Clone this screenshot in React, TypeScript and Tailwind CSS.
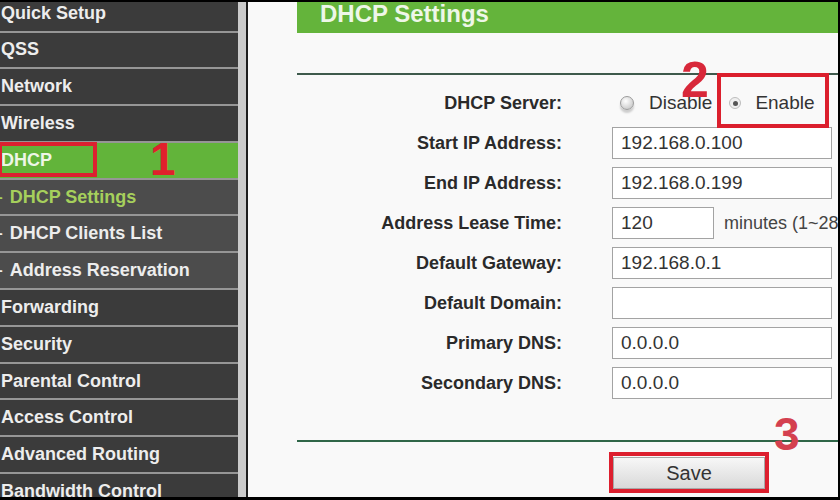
import React from "react";

type NavItem = { label: string; kind: "main" | "active" | "sub" | "subActive" };

const navItems: NavItem[] = [
    { label: "Quick Setup", kind: "main" },
    { label: "QSS", kind: "main" },
    { label: "Network", kind: "main" },
    { label: "Wireless", kind: "main" },
    { label: "DHCP", kind: "active" },
    { label: "DHCP Settings", kind: "subActive" },
    { label: "DHCP Clients List", kind: "sub" },
    { label: "Address Reservation", kind: "sub" },
    { label: "Forwarding", kind: "main" },
    { label: "Security", kind: "main" },
    { label: "Parental Control", kind: "main" },
    { label: "Access Control", kind: "main" },
    { label: "Advanced Routing", kind: "main" },
    { label: "Bandwidth Control", kind: "main" },
];

const fields = [
    { label: "Start IP Address:", value: "192.168.0.100" },
    { label: "End IP Address:", value: "192.168.0.199" },
    { label: "Address Lease Time:", value: "120", lease: true },
    { label: "Default Gateway:", value: "192.168.0.1" },
    { label: "Default Domain:", value: "" },
    { label: "Primary DNS:", value: "0.0.0.0" },
    { label: "Secondary DNS:", value: "0.0.0.0" },
];

function SideRow({ item }: { item: NavItem }) {
    const bg =
        item.kind === "active"
            ? "bg-[#62b43a] text-[#eef6e6]"
            : item.kind === "main"
            ? "bg-[#3b3b3b] text-[#ededed]"
            : item.kind === "subActive"
            ? "bg-[#4c4c4c] text-[#a6d05c]"
            : "bg-[#4c4c4c] text-[#ededed]";
    const isSub = item.kind === "sub" || item.kind === "subActive";
    return (
        <div
            className={`h-[36.8px] shrink-0 border-b-2 border-[#969696] flex items-center pl-[1px] text-[18px] font-bold whitespace-nowrap ${bg}`}
        >
            {isSub && <span className="-ml-[3px] mr-[7px] text-[14px]">-</span>}
            {item.label}
        </div>
    );
}

export default function App() {
    return (
        <div
            className="relative w-[840px] h-[500px] overflow-hidden flex border-t-2 border-r-2 border-b-[3px] border-black bg-[#f8f8f8]"
            style={{ fontFamily: '"Liberation Sans", Arial, sans-serif' }}
        >
            {/* sidebar */}
            <div className="w-[238px] shrink-0 flex flex-col -mt-[6.3px]">
                {navItems.map((item) => (
                    <SideRow key={item.label} item={item} />
                ))}
            </div>
            <div className="w-[8px] shrink-0 bg-[#cbcbcb]" />
            <div className="w-[2px] shrink-0 bg-[#1e1e1e]" />

            {/* content */}
            <div className="flex-1 flex flex-col overflow-hidden bg-[#f9f9f9]">
                <div className="ml-[49px] -mt-[7px] h-[38px] shrink-0 bg-[#64b43b] flex items-center pl-[23px] text-[24px] font-bold text-[#eef7e8]">
                    DHCP Settings
                </div>
                <div className="ml-[49px] mt-[40px] h-[2px] shrink-0 bg-[#3e5a4c]" />

                <div className="ml-[49px] mt-[8px] grid grid-cols-[265px_220px] gap-x-[50px] text-[#2a2a2a]">
                    <div className="h-[40px] flex items-center justify-end text-[18px] font-bold">DHCP Server:</div>
                    <div className="h-[40px] flex items-center text-[19px] text-[#333] whitespace-nowrap">
                        <span className="ml-[8px] w-[14px] h-[14px] shrink-0 rounded-full border border-[#9c9c9c] bg-[radial-gradient(circle_at_40%_35%,#ffffff,#bdbdbd)] shadow-[0_3px_2px_rgba(0,0,0,0.18)]" />
                        <span className="ml-[15px]">Disable</span>
                        <span className="ml-[17px] w-[12px] h-[12px] shrink-0 rounded-full border border-[#bdbdbd] bg-[#efefef] flex items-center justify-center">
                            <span className="w-[5px] h-[5px] rounded-full bg-[#555]" />
                        </span>
                        <span className="ml-[14px]">Enable</span>
                    </div>

                    {fields.map((f) => (
                        <React.Fragment key={f.label}>
                            <div className="h-[40px] flex items-center justify-end text-[18px] font-bold whitespace-nowrap">
                                {f.label}
                            </div>
                            <div className="h-[40px] flex items-center whitespace-nowrap">
                                <div
                                    className={`h-[32px] shrink-0 ${f.lease ? "w-[102px]" : "w-[220px]"} border border-[#a3a3a3] bg-white flex items-center px-[8px] text-[19px] text-[#333]`}
                                >
                                    {f.value}
                                </div>
                                {f.lease && (
                                    <span className="ml-[10px] shrink-0 text-[18px] text-[#444]">minutes (1~2880)</span>
                                )}
                            </div>
                        </React.Fragment>
                    ))}
                </div>

                <div className="ml-[49px] mt-[37px] h-[2px] shrink-0 bg-[#2f6648]" />
                <div className="mt-[15px] ml-[365px]">
                    <button className="w-[152px] h-[32px] border border-[#a8a8a8] bg-gradient-to-b from-[#f7f7f7] to-[#d9d9d9] text-[20px] text-[#333]">
                        Save
                    </button>
                </div>
            </div>

            {/* annotations */}
            <div className="absolute left-[-2px] top-[140px] w-[99px] h-[35px] border-4 border-[#dc2130]" />
            <span className="absolute left-[150px] top-[134px] text-[46px] font-bold leading-none text-[#e0202c]">1</span>
            <div className="absolute left-[717px] top-[71px] w-[112px] h-[55px] border-4 border-[#db1f2d]" />
            <span className="absolute left-[681px] top-[53px] text-[50px] font-bold leading-none text-[#d8283a]">2</span>
            <div className="absolute left-[609px] top-[450px] w-[160px] h-[41px] border-4 border-[#dd1f2e]" />
            <span className="absolute left-[774px] top-[409px] text-[46px] font-bold leading-none text-[#d4404f]">3</span>
        </div>
    );
}
